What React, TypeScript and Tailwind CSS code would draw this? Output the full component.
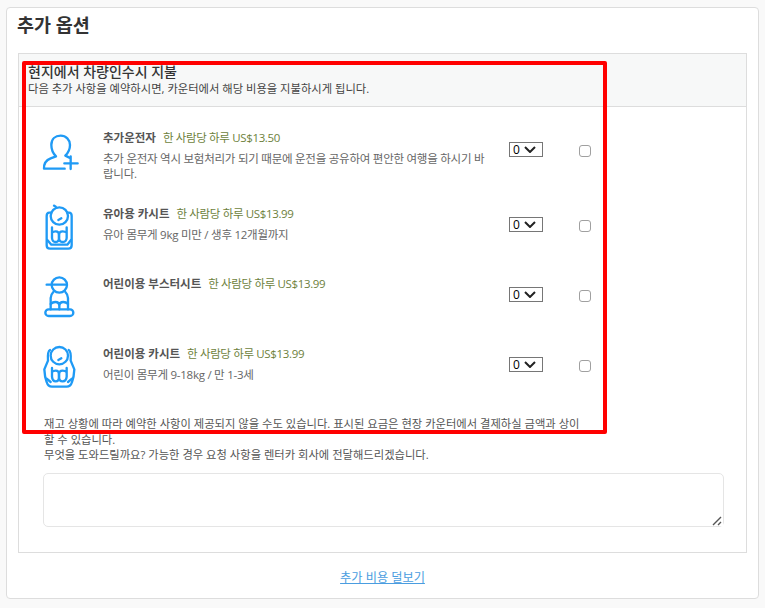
import React from "react";

const FONT = "font-['Open_Sans','Noto_Sans_CJK_KR',sans-serif]";

function IconFrame({ children, className }: { children: React.ReactNode; className: string }) {
  return (
    <svg
      viewBox="0 0 180 180"
      fill="none"
      stroke="#1f9af5"
      strokeWidth="7"
      strokeLinecap="round"
      strokeLinejoin="round"
      className={`w-[60px] h-[60px] shrink-0 ${className}`}
    >
      {children}
    </svg>
  );
}

function DriverIcon({ className }: { className: string }) {
  return (
    <IconFrame className={className}>
      <path d="M104 131 H42 Q41 108 62 100 L78 94 Q64 80 64 60 C64 42 76 32 92 32 C108 32 120 44 120 60 C120 74 114 84 106 92 L118 98" />
      <path d="M122 94 V132 M103 115 H143" />
    </IconFrame>
  );
}

function InfantIcon({ className }: { className: string }) {
  return (
    <IconFrame className={className}>
      <circle cx="88" cy="48" r="26" />
      <path d="M72 17 Q78 19 79 23 M85 60 L94 55" />
      <path d="M64 38 H58 Q50 38 50 48 V136 Q50 146 60 146 H115 Q125 146 125 136 V48 Q125 38 117 38 H112" />
      <path d="M66 82 V114 Q67 126 77 126 Q87 126 87 114 V104 Q87 94 77 94 Q70 94 66 98" />
      <path d="M110 82 V114 Q109 126 98 126 Q87 126 87 114 V104 Q87 94 98 94 Q105 94 110 98" />
      <path d="M52 120 L64 134 H112 L123 120" />
    </IconFrame>
  );
}

function BoosterIcon({ className }: { className: string }) {
  return (
    <IconFrame className={className}>
      <circle cx="88" cy="45" r="23" />
      <path d="M50 44 H110" />
      <path d="M70 66 Q62 74 62 84 V118 M106 66 Q114 74 114 84 V118" />
      <path d="M62 102 Q68 96 76 96 Q88 96 88 108 V118 M88 108 Q88 96 100 96 Q108 96 114 102" />
      <rect x="46" y="118" width="84" height="20" rx="10" />
    </IconFrame>
  );
}

function ChildSeatIcon({ className }: { className: string }) {
  return (
    <IconFrame className={className}>
      <circle cx="88" cy="53" r="26" />
      <path d="M85 66 L94 61" />
      <path d="M60 36 Q52 40 54 68 L43 94 Q44 116 50 132 Q54 146 66 146 H110 Q122 146 126 132 Q132 116 133 94 L122 68 Q124 40 116 36" />
      <path d="M66 90 V116 Q67 130 77 130 Q87 130 87 116 V108 Q87 98 77 98 Q70 98 66 102" />
      <path d="M110 90 V116 Q109 130 98 130 Q87 130 87 116 V108 Q87 98 98 98 Q105 98 110 102" />
      <path d="M50 122 L62 132 M126 122 L114 132" />
    </IconFrame>
  );
}

const rows = [
  {
    name: "추가운전자",
    price: "한 사람당 하루 US$13.50",
    desc: "추가 운전자 역시 보험처리가 되기 때문에 운전을 공유하여 편안한 여행을 하시기 바랍니다.",
    icon: <DriverIcon className="-mt-[2px]" />,
    rowClass: "h-[76px]",
    selectTop: "mt-[15px]",
    checkTop: "mt-[18px]",
  },
  {
    name: "유아용 카시트",
    price: "한 사람당 하루 US$13.99",
    desc: "유아 몸무게 9kg 미만 / 생후 12개월까지",
    icon: <InfantIcon className="-mt-[3px]" />,
    rowClass: "h-[70px]",
    selectTop: "mt-[14px]",
    checkTop: "mt-[17px]",
  },
  {
    name: "어린이용 부스터시트",
    price: "한 사람당 하루 US$13.99",
    desc: "",
    icon: <BoosterIcon className="-mt-[3px]" />,
    rowClass: "h-[70px]",
    selectTop: "mt-[14px]",
    checkTop: "mt-[17px]",
  },
  {
    name: "어린이용 카시트",
    price: "한 사람당 하루 US$13.99",
    desc: "어린이 몸무게 9-18kg / 만 1-3세",
    icon: <ChildSeatIcon className="-mt-[5px]" />,
    rowClass: "h-[70px]",
    selectTop: "mt-[14px]",
    checkTop: "mt-[17px]",
  },
];

export default function App() {
  return (
    <div className={`relative h-[608px] w-[765px] overflow-hidden bg-[#f9f9f9] pt-[7px] pl-[6px] ${FONT}`}>
      {/* Card */}
      <div className="h-[592px] w-[753px] rounded-[4px] border border-[#dddddd] bg-white">
        <h2 className="pl-[10px] pt-[3px] h-[45px] text-[18.5px] leading-[27px] font-bold text-[#333333]">추가 옵션</h2>

        {/* Options panel */}
        <div className="ml-[11px] h-[500px] w-[729px] border border-[#dddddd]">
          <div className="h-[53px] border-b border-[#dddddd] bg-[#f7f8f8] pl-[9px] pt-[9px]">
            <p className="text-[14px] leading-[17px] font-medium text-[#333333]">현지에서 차량인수시 지불</p>
            <p className="mt-[1px] text-[11.3px] leading-[15px] text-[#444444]">
              다음 추가 사항을 예약하시면, 카운터에서 해당 비용을 지불하시게 됩니다.
            </p>
          </div>

          <div className="pt-[20px]">
            {rows.map((row) => (
              <div key={row.name} className={`flex ${row.rowClass}`}>
                <div className="ml-[11px] flex w-[73px] items-start">{row.icon}</div>
                <div className="w-[392px] pr-[4px] pt-[1px]">
                  <p className="text-[11.5px] leading-[20px] text-[#555555]">
                    <span className="font-bold">{row.name}</span>
                    <span className="ml-[7px] tracking-[-0.35px] text-[#6d7f3c]">{row.price}</span>
                  </p>
                  {row.desc && (
                    <p className="mt-[3px] text-[11.5px] leading-[15px] tracking-[-0.25px] text-[#666666]">{row.desc}</p>
                  )}
                </div>
                <div className={`relative ml-[14px] h-[15px] w-[70px] ${row.selectTop}`}>
                  <select className="block h-[15px] w-[34px] appearance-none border border-[#767676] py-0 pl-[3px] text-[12px] leading-[13px] text-black">
                    <option>0</option>
                  </select>
                  <svg
                    viewBox="0 0 12 7"
                    fill="none"
                    stroke="#222222"
                    strokeWidth="2"
                    className="pointer-events-none absolute left-[15px] top-[4px] h-[7px] w-[12px]"
                  >
                    <path d="M1 1 L6 6 L11 1" />
                  </svg>
                </div>
                <input
                  type="checkbox"
                  className={`h-[12px] w-[12px] appearance-none rounded-[3px] border border-[#a0a0a0] bg-white ${row.checkTop}`}
                />
              </div>
            ))}
          </div>

          <div className="ml-[25px] w-[540px] pt-[3px] text-[11.3px] leading-[15.5px] text-[#555555]">
            <p>재고 상황에 따라 예약한 사항이 제공되지 않을 수도 있습니다. 표시된 요금은 현장 카운터에서 결제하실 금액과 상이할 수 있습니다.</p>
            <p>무엇을 도와드릴까요? 가능한 경우 요청 사항을 렌터카 회사에 전달해드리겠습니다.</p>
          </div>

          <div className="relative ml-[24px] mt-[10px] h-[54px] w-[681px]">
            <textarea className="block h-[54px] w-[681px] rounded-[5px] border border-[#e5e5e5] bg-white" />
            <svg
              viewBox="0 0 12 12"
              fill="none"
              stroke="#555555"
              strokeWidth="1.4"
              className="pointer-events-none absolute bottom-[1px] right-[1px] h-[12px] w-[12px] bg-white"
            >
              <path d="M2 11 L10 3 M7 11 L10 8" />
            </svg>
          </div>
        </div>

        <div className="pt-[11px] text-center">
          <a href="#" className="text-[12.2px] leading-[18px] text-[#4a9de0] underline">
            추가 비용 덜보기
          </a>
        </div>
      </div>

      {/* Red highlight drawn over the screenshot */}
      <div className="absolute left-[22px] top-[61px] h-[373px] w-[585px] rounded-[2px] border-4 border-[#ff0000]" />
    </div>
  );
}
